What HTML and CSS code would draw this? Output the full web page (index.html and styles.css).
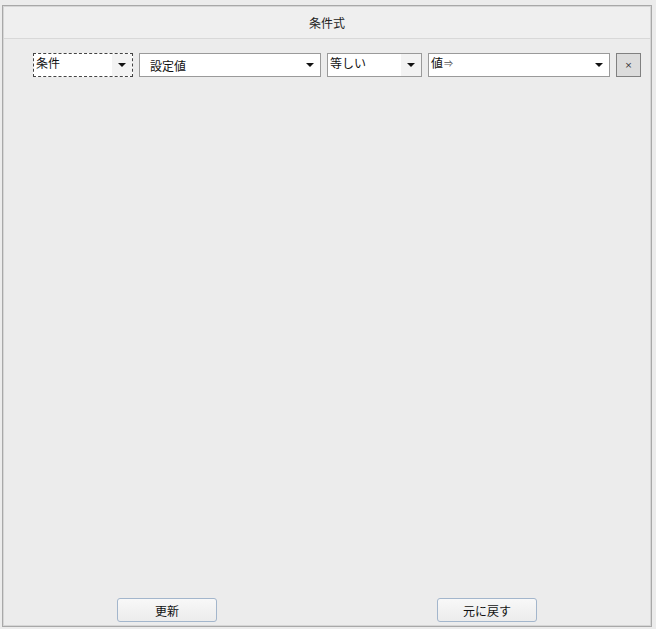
FILE: index.html
```html
<!DOCTYPE html>
<html lang="ja">
<head>
    <meta charset="UTF-8">
    <meta name="viewport" content="width=device-width, initial-scale=1.0">
    <title>条件式</title>
    <link rel="stylesheet" href="styles.css">
</head>
<body>
    <div class="panel">
        <header class="panel-title">条件式</header>
        <main class="conditions">
            <div class="cond-row">
                <div class="combo combo-field focused">
                    <span class="combo-text">条件</span>
                    <span class="combo-btn gray"><i class="arrow"></i></span>
                </div>
                <div class="combo combo-key">
                    <span class="combo-text indent">設定値</span>
                    <span class="combo-btn"><i class="arrow"></i></span>
                </div>
                <div class="combo combo-op">
                    <span class="combo-text">等しい</span>
                    <span class="combo-btn gray"><i class="arrow"></i></span>
                </div>
                <div class="combo combo-val">
                    <span class="combo-text">値<small class="arrow-sign">⇒</small></span>
                    <span class="combo-btn"><i class="arrow"></i></span>
                </div>
                <button class="remove-btn">×</button>
            </div>
        </main>
        <footer class="actions">
            <button class="action-btn">更新</button>
            <button class="action-btn">元に戻す</button>
        </footer>
    </div>
</body>
</html>
```

FILE: styles.css
```css
html, body {
    height: 100%;
}

body {
    margin: 0;
    padding: 5px 4px 2px 2px;
    box-sizing: border-box;
    background-color: #ececec;
    font-family: "Noto Sans CJK JP", "Noto Sans", sans-serif;
    font-size: 12px;
    color: #111;
}

.panel {
    height: 100%;
    box-sizing: border-box;
    display: flex;
    flex-direction: column;
    border: 1px solid #a8a8a8;
    box-shadow: inset 1px 1px 0 #d6d6d6, inset -1px -1px 0 #d6d6d6;
    background-color: #ececec;
}

.panel-title {
    height: 31px;
    line-height: 31px;
    text-align: center;
    background-color: #efefef;
    border-bottom: 1px solid #d8d8d8;
    margin: 1px 1px 0;
    color: #222;
    font-size: 12px;
}

.conditions {
    flex: 1;
    padding: 14px 0 0 30px;
}

.cond-row {
    display: flex;
    gap: 6px;
    height: 24px;
}

.combo {
    display: flex;
    box-sizing: border-box;
    height: 24px;
    border: 1px solid #9a9a9a;
    background-color: #fff;
}

.combo-field { width: 100px; }
.combo-key { width: 182px; }
.combo-op { width: 95px; }
.combo-val { width: 182px; }

.combo.focused {
    border: 1px dashed #444;
}

.combo-text {
    flex: 1;
    line-height: 18px;
    padding-left: 2px;
    white-space: nowrap;
}

.combo-text.indent {
    padding-left: 10px;
    line-height: 24px;
}

.arrow-sign {
    font-size: 9px;
    color: #555;
    margin-left: 1px;
    vertical-align: 1px;
}

.combo-btn {
    width: 20px;
    display: flex;
    align-items: center;
    justify-content: center;
}

.combo-btn.gray {
    background-color: #f3f3f3;
}

.arrow {
    width: 0;
    height: 0;
    border-left: 4px solid transparent;
    border-right: 4px solid transparent;
    border-top: 4px solid #111;
}

.remove-btn {
    width: 25px;
    height: 24px;
    box-sizing: border-box;
    padding: 0;
    border: 1px solid #808080;
    background-color: #dcdcdc;
    color: #333;
    font-family: "DejaVu Sans", sans-serif;
    font-size: 9px;
    line-height: 20px;
}

.actions {
    display: flex;
    gap: 220px;
    padding: 0 0 4px 114px;
}

.action-btn {
    width: 100px;
    height: 24px;
    padding: 0;
    border: 1px solid #a3b6cc;
    border-radius: 3px;
    background: linear-gradient(#f8f8f8, #ececec);
    font-family: "Noto Sans CJK JP", "Noto Sans", sans-serif;
    font-size: 12px;
    color: #111;
}
```
